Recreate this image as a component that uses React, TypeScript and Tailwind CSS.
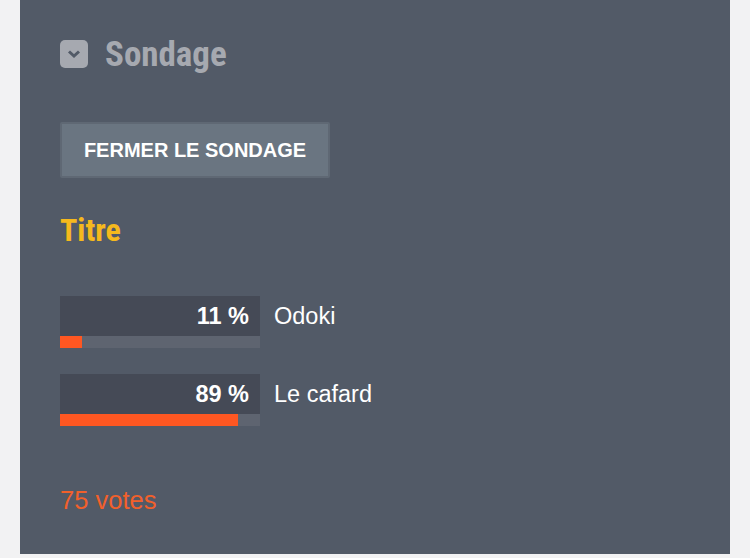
import React from "react";

const options = [
  { label: "Odoki", pct: 11 },
  { label: "Le cafard", pct: 89 },
];

const condensed = {
  fontFamily: '"Liberation Sans Narrow", "Roboto Condensed", Roboto, sans-serif',
};

export default function App() {
  return (
    <div className="min-h-[558px] w-[750px] bg-[#f2f2f3] pl-5 pr-5">
      <div className="h-[554px] bg-[#525a67] px-10 pt-10">
        {/* heading */}
        <div className="flex h-7 items-center gap-[17px]">
          <span className="flex h-7 w-7 items-center justify-center rounded-[5px] bg-[#a6a9b0]">
            <svg width="14" height="10" viewBox="0 0 14 10">
              <path d="M2 2.5 L7 7 L12 2.5" fill="none" stroke="#525a67" strokeWidth="3" />
            </svg>
          </span>
          <h1
            className="text-[35px] font-bold leading-none text-[#a6a9b0]"
            style={condensed}
          >
            Sondage
          </h1>
        </div>

        <button className="mt-[54px] h-14 w-[270px] rounded-[2px] border-2 border-[#5f6874] bg-[#6a7581] font-['Liberation_Sans',sans-serif] text-[20px] font-bold text-white">
          FERMER LE SONDAGE
        </button>

        <h2
          className="mt-[36px] text-[32px] font-bold leading-none text-[#f6b91d]"
          style={condensed}
        >
          Titre
        </h2>

        <div className="mt-[50px] flex flex-col gap-[26px]">
          {options.map((o) => (
            <div key={o.label} className="flex items-start">
              <div className="w-[200px]">
                <div className="flex h-10 items-center justify-end bg-[#454a56] pr-[11px] pt-[2px] font-['Liberation_Sans',sans-serif] text-[23.5px] font-bold text-white">
                  {o.pct} %
                </div>
                <div className="h-3 bg-[#5e6470]">
                  <div className="h-3 bg-[#ff5722]" style={{ width: `${o.pct}%` }} />
                </div>
              </div>
              <span className="ml-[14px] flex h-10 items-center pt-[2px] font-['Liberation_Sans',sans-serif] text-[23.5px] text-white">
                {o.label}
              </span>
            </div>
          ))}
        </div>

        <p className="mt-[62px] font-['Liberation_Sans',sans-serif] text-[25.5px] leading-none text-[#f2602b]">
          75 votes
        </p>
      </div>
    </div>
  );
}
